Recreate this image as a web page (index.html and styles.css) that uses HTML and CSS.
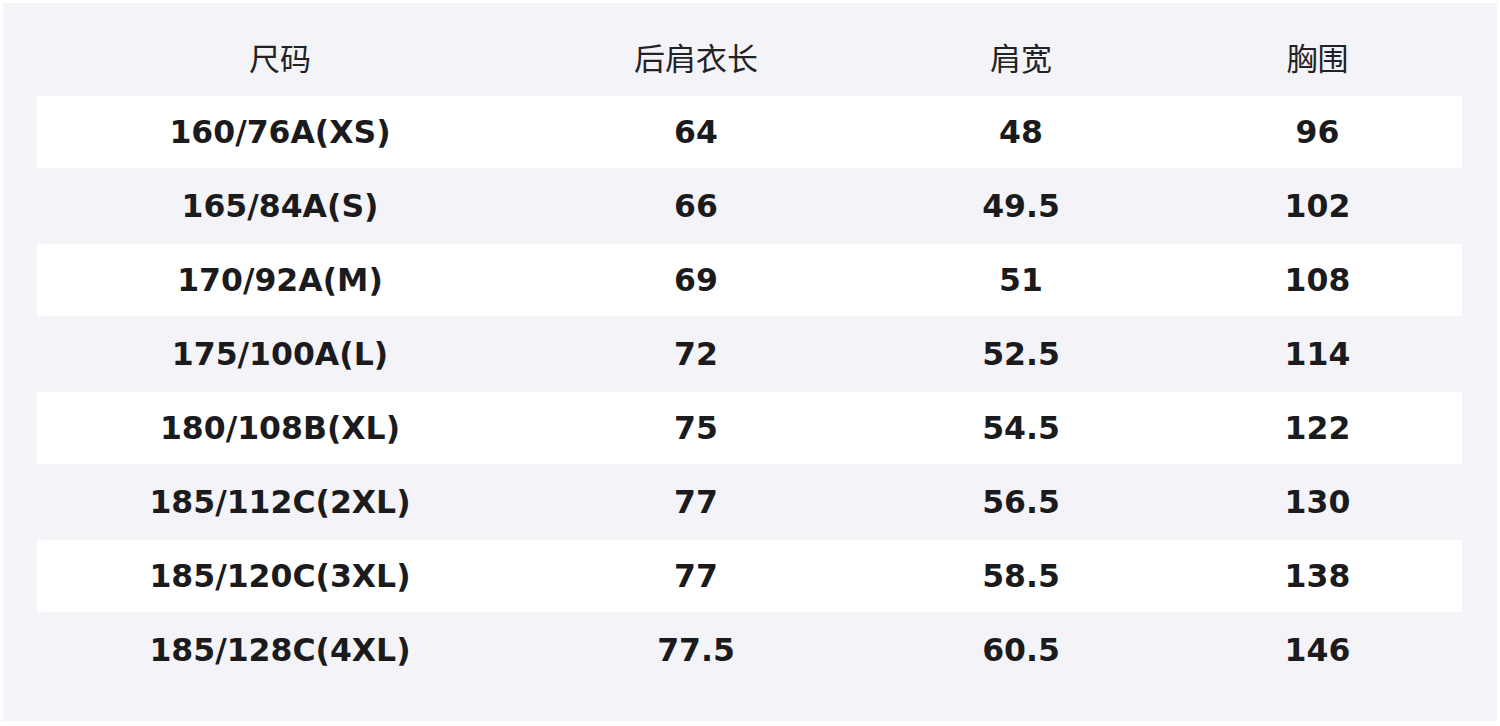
FILE: index.html
```html
<!DOCTYPE html>
<html lang="zh">
<head>
<meta charset="utf-8">
<title>尺码表</title>
<link rel="stylesheet" href="styles.css">
</head>
<body>
<div class="panel">
  <div class="table">
    <div class="row head"><div>尺码</div><div>后肩衣长</div><div>肩宽</div><div>胸围</div></div>
    <div class="row odd"><div>160/76A(XS)</div><div>64</div><div>48</div><div>96</div></div>
    <div class="row even"><div>165/84A(S)</div><div>66</div><div>49.5</div><div>102</div></div>
    <div class="row odd"><div>170/92A(M)</div><div>69</div><div>51</div><div>108</div></div>
    <div class="row even"><div>175/100A(L)</div><div>72</div><div>52.5</div><div>114</div></div>
    <div class="row odd"><div>180/108B(XL)</div><div>75</div><div>54.5</div><div>122</div></div>
    <div class="row even"><div>185/112C(2XL)</div><div>77</div><div>56.5</div><div>130</div></div>
    <div class="row odd"><div>185/120C(3XL)</div><div>77</div><div>58.5</div><div>138</div></div>
    <div class="row even"><div>185/128C(4XL)</div><div>77.5</div><div>60.5</div><div>146</div></div>
  </div>
</div>
</body>
</html>
```

FILE: styles.css
```css
html, body {
  margin: 0;
  padding: 0;
  background: #ffffff;
}
body {
  padding: 3px;
  width: 1500px;
  height: 726px;
  box-sizing: border-box;
}
.panel {
  background: #f3f3f8;
  height: 718px;
  width: 1494px;
  box-sizing: border-box;
  padding: 0 35px 0 34px;
}
.table {
  display: flex;
  flex-direction: column;
}
.row {
  display: grid;
  grid-template-columns: 486px 346px 304px 289px;
  align-items: center;
  justify-items: center;
  font-family: "DejaVu Sans", "Noto Sans CJK SC", sans-serif;
  font-weight: bold;
  font-size: 31.5px;
  color: #1b1b1d;
}
.row.head {
  height: 93px;
  font-family: "Noto Sans CJK SC", "Noto Sans", sans-serif;
  font-weight: normal;
  font-size: 31px;
  color: #222224;
  padding-top: 13px;
  box-sizing: border-box;
}
.row.odd {
  background: #ffffff;
  height: 72px;
}
.row.even {
  height: 76px;
}
```
